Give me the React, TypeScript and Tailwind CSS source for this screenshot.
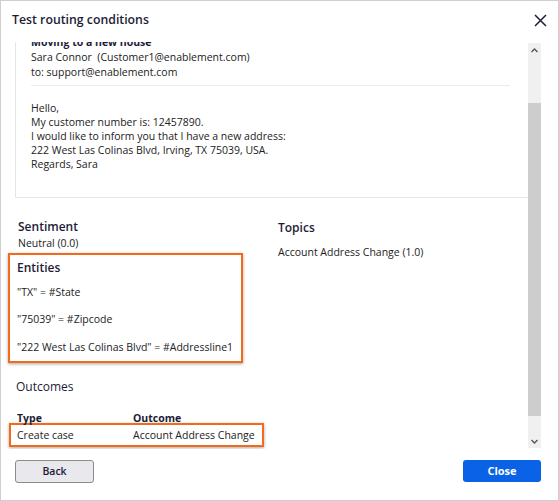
import React from "react";

export default function App() {
  return (
    <div
      className="w-[559px] h-[501px] bg-white border border-[#cfcfcf] flex flex-col text-[#222] overflow-hidden"
      style={{ fontFamily: '"Open Sans", "Noto Sans", sans-serif' }}
    >
      {/* Header */}
      <div className="h-[41px] shrink-0 flex items-center justify-between pl-[11px] pr-[11px] pb-[2px]">
        <div className="text-[12.3px] font-semibold text-[#1c1c38]">Test routing conditions</div>
        <svg width="13" height="13" viewBox="0 0 13 13">
          <path d="M1 1 L12 12 M12 1 L1 12" stroke="#1c1c38" strokeWidth="1.5" fill="none" />
        </svg>
      </div>

      {/* Main */}
      <div className="h-[407px] shrink-0 flex">
        <div className="flex-1 overflow-hidden">
          <div className="-mt-[8px]">
            {/* Email box */}
            <div className="ml-[14px] w-[530px] border border-[#e6e6e6] pl-[15px] pt-[0px] pb-[26px] text-[10.5px]">
              <div className="leading-[15px] font-bold text-[#1c1c38]">Moving to a new house</div>
              <div className="leading-[15px]">Sara Connor&nbsp; (Customer1@enablement.com)</div>
              <div className="leading-[15px]">to: support@enablement.com</div>
              <div className="mt-[5px] h-px w-[479px] bg-[#ececec]" />
              <div className="mt-[15px] leading-[14px]">
                <div>Hello,</div>
                <div>My customer number is: 12457890.</div>
                <div>I would like to inform you that I have a new address:</div>
                <div>222 West Las Colinas Blvd, Irving, TX 75039, USA.</div>
                <div>Regards, Sara</div>
              </div>
            </div>

            {/* Lower section */}
            <div className="flex">
              <div className="w-[277px] shrink-0">
                <div className="pl-[17px] pt-[20px]">
                  <div className="text-[12px] leading-[18px] font-semibold text-[#1c1c38]">Sentiment</div>
                  <div className="text-[10.5px] leading-[16px] -mt-[1px]">Neutral (0.0)</div>
                </div>
                <div className="ml-[7px] mt-[2px] w-[235px] border-2 border-[#f26b1d] shadow-[0_1px_3px_rgba(0,0,0,0.35)] pl-[7px] pt-[4px] pb-[6px]">
                  <div className="text-[12px] leading-[18px] font-semibold text-[#1c1c38]">Entities</div>
                  <div className="text-[10.5px] leading-[16px] mt-[7px]">"TX" = #State</div>
                  <div className="text-[10.5px] leading-[16px] mt-[11px]">"75039" = #Zipcode</div>
                  <div className="text-[10.5px] leading-[16px] mt-[12px]">"222 West Las Colinas Blvd" = #Addressline1</div>
                </div>
                <div className="pl-[15px] mt-[15px] text-[12px] leading-[18px] font-medium text-[#1c1c38]">Outcomes</div>
                <div className="pl-[16px] mt-[14px] flex text-[10.5px] leading-[16px] font-bold text-[#1c1c38]">
                  <div className="w-[116px]">Type</div>
                  <div>Outcome</div>
                </div>
                <div className="ml-[8px] -mt-[3px] w-[255px] h-[24px] border-2 border-[#f26b1d] shadow-[0_1px_3px_rgba(0,0,0,0.35)] pl-[6px] pt-[2px] flex text-[10.5px] leading-[16px]">
                  <div className="w-[116px]">Create case</div>
                  <div>Account Address Change</div>
                </div>
              </div>
              <div className="pt-[21px]">
                <div className="text-[12px] leading-[18px] font-semibold text-[#1c1c38]">Topics</div>
                <div className="text-[10.5px] leading-[16px] mt-[7px]">Account Address Change (1.0)</div>
              </div>
            </div>
          </div>
        </div>

        {/* Scrollbar */}
        <div className="w-[13px] shrink-0 mt-[1px] mb-[1px] mr-[17px] bg-[#f0f0f0] flex flex-col">
          <div className="h-[14px] flex items-center justify-center">
            <svg width="7" height="5" viewBox="0 0 7 5">
              <path d="M0.5 4 L3.5 1 L6.5 4" stroke="#555" strokeWidth="1.4" fill="none" />
            </svg>
          </div>
          <div className="mt-[46px] h-[313px] bg-[#cdcdcd]" />
          <div className="flex-1" />
          <div className="h-[14px] flex items-center justify-center">
            <svg width="7" height="5" viewBox="0 0 7 5">
              <path d="M0.5 1 L3.5 4 L6.5 1" stroke="#555" strokeWidth="1.4" fill="none" />
            </svg>
          </div>
        </div>
      </div>

      {/* Footer */}
      <div className="flex-1 flex items-start justify-between pt-[11px] pl-[14px] pr-[17px]">
        <button className="w-[79px] h-[23px] bg-[#e8e8ed] border border-[#8c8c8c] rounded-[3px] text-[10.5px] font-semibold text-[#1c1c38]">
          Back
        </button>
        <button className="w-[78px] h-[22px] bg-[#0a63e6] rounded-[3px] text-[11px] font-bold text-white">
          Close
        </button>
      </div>
    </div>
  );
}
